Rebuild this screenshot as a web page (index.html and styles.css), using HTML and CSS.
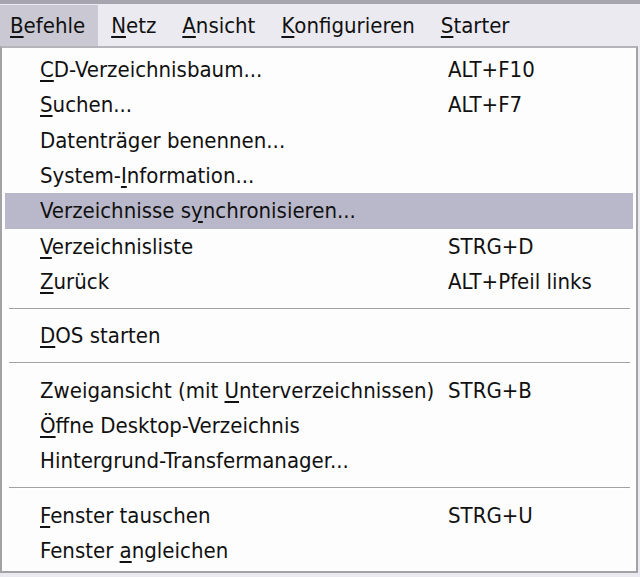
FILE: index.html
```html
<!DOCTYPE html>
<html lang="de">
<head>
    <meta charset="UTF-8">
    <title>Befehle</title>
    <link rel="stylesheet" href="styles.css">
</head>
<body>
    <div class="topline"></div>
    <div class="menubar">
        <span class="bar-item active"><u>B</u>efehle</span>
        <span class="bar-item"><u>N</u>etz</span>
        <span class="bar-item"><u>A</u>nsicht</span>
        <span class="bar-item"><u>K</u>onfigurieren</span>
        <span class="bar-item"><u>S</u>tarter</span>
    </div>

    <div class="dropdown">
        <div class="item"><span><u>C</u>D-Verzeichnisbaum...</span><span>ALT+F10</span></div>
        <div class="item"><span><u>S</u>uchen...</span><span>ALT+F7</span></div>
        <div class="item"><span>Datenträger benennen...</span><span></span></div>
        <div class="item"><span>System-<u>I</u>nformation...</span><span></span></div>
        <div class="item selected"><span>Verzeichnisse s<u>y</u>nchronisieren...</span><span></span></div>
        <div class="item"><span><u>V</u>erzeichnisliste</span><span>STRG+D</span></div>
        <div class="item"><span><u>Z</u>urück</span><span>ALT+Pfeil links</span></div>
        <div class="separator"></div>
        <div class="item"><span><u>D</u>OS starten</span><span></span></div>
        <div class="separator"></div>
        <div class="item"><span>Zweigansicht (mit <u>U</u>nterverzeichnissen)</span><span>STRG+B</span></div>
        <div class="item"><span><u>Ö</u>ffne Desktop-Verzeichnis</span><span></span></div>
        <div class="item"><span>Hintergrund-Transfermanager...</span><span></span></div>
        <div class="separator"></div>
        <div class="item"><span><u>F</u>enster tauschen</span><span>STRG+U</span></div>
        <div class="item"><span>Fenster <u>a</u>ngleichen</span><span></span></div>
    </div>
</body>
</html>
```

FILE: styles.css
```css
body {
    margin: 0;
    background-color: #ebeaf0;
    font-family: "DejaVu Sans Condensed", "DejaVu Sans", sans-serif;
    font-stretch: condensed;
    font-size: 22px;
    color: #111111;
    overflow: hidden;
}

u {
    text-decoration-thickness: 2px;
    text-underline-offset: 3px;
}

.topline {
    height: 4px;
    background-color: #a6a5ae;
}

.menubar {
    display: flex;
    height: 42px;
    align-items: stretch;
    padding-top: 1px;
    box-sizing: border-box;
}

.bar-item {
    display: flex;
    align-items: center;
    padding: 0 13px 0 13px;
}

.bar-item.active {
    background-color: #c9c8d3;
    padding-left: 10px;
}

.dropdown {
    width: 638px;
    box-sizing: border-box;
    border: 2px solid #a3a3a6;
    border-top-color: #b4b4ba;
    background-color: #fdfdfd;
    padding: 4px 3px 3px 3px;
}

.item {
    display: grid;
    grid-template-columns: 408px 1fr;
    align-items: center;
    height: 35.33px;
    padding-left: 35px;
}

.item.selected {
    background-color: #b9b8ca;
}

.separator {
    height: 19px;
    display: flex;
    align-items: center;
    padding: 0 3px 0 4px;
}

.separator::before {
    content: "";
    flex: 1;
    height: 1px;
    background-color: #a2a1a6;
    border-bottom: 1px solid #ffffff;
}
```
